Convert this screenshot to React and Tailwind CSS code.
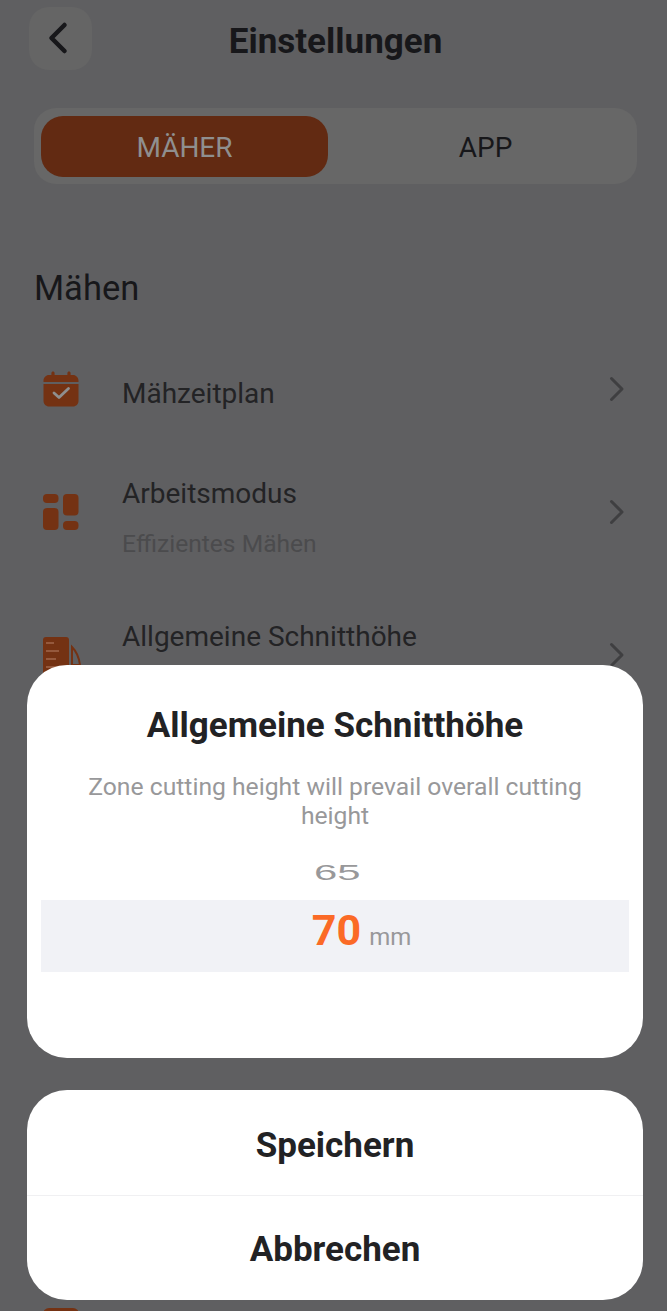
import { ChevronLeft } from 'lucide-react';

function CalendarIcon() {
  return (
    <svg width="36" height="36" viewBox="0 0 36 36" fill="none">
      <path d="M10 0.5c.9 0 1.6.7 1.6 1.6V4h12.8V2.1c0-.9.7-1.6 1.6-1.6s1.6.7 1.6 1.6V4h2.4C33 4 35.5 6.500 35.500 9.500V11H.5V9.500C.5 6.500 3 4 6 4h2.400V2.100c0-.9.7-1.600 1.600-1.600z" fill="#743213" />
      <path d="M.5 13h35V30c0 3-2.500 5.500-5.500 5.500H6C3 35.500.5 33 .5 30z" fill="#743213" />
      <path d="M11 22l5 4.500L25.500 17.500" stroke="#8f8f8f" strokeWidth="2.800" strokeLinecap="round" strokeLinejoin="round" />
    </svg>
  );
}

function GridIcon() {
  return (
    <svg width="36" height="36" viewBox="0 0 36 36" fill="#743213">
      <rect x="0" y="0" width="15.500" height="9" rx="4" />
      <rect x="0" y="14" width="15.500" height="22" rx="4" />
      <rect x="20" y="0" width="15.500" height="21.500" rx="4" />
      <rect x="20" y="27" width="15.500" height="9" rx="4" />
    </svg>
  );
}

function HeightIcon() {
  return (
    <svg width="38" height="44" viewBox="0 0 38 44" fill="none">
      <rect x="0" y="0" width="26" height="44" rx="3" fill="#743213" />
      <path d="M3 6h8M3 14h13M3 22h10M3 30h13" stroke="#a0674c" strokeWidth="1.500" />
      <path d="M29 10c4 4 7 10 8 18h-8z" stroke="#743213" strokeWidth="2" />
    </svg>
  );
}

function RowChevron({ className }) {
  return (
    <svg width="16" height="26" viewBox="0 0 16 26" fill="none" className={`shrink-0 mr-[42px] ${className}`}>
      <path d="M2.500 2.500l10.500 10.500-10.500 10.500" stroke="#3f3f41" strokeWidth="3" strokeLinecap="round" strokeLinejoin="round" />
    </svg>
  );
}

function SettingRow({ icon, title, subtitle, className, textClass, chevronClass }) {
  return (
    <div className={`flex ${className}`}>
      <div className="ml-[43px] w-[79px] shrink-0">{icon}</div>
      <div className={`flex-1 ${textClass}`}>
        <div className="text-[28px] leading-[36px] text-[#232325]">{title}</div>
        {subtitle && <div className="mt-[14px] text-[24.600px] leading-[36px] text-[#4b4b4d]">{subtitle}</div>}
      </div>
      <RowChevron className={chevronClass} />
    </div>
  );
}

export default function App() {
  return (
    <div className="relative w-[667px] h-[1311px] overflow-hidden bg-[#5f5f61] font-['Roboto',sans-serif]">
      {/* settings page behind the sheet */}
      <div className="pt-[7px]">
        <div className="relative h-[63px] flex items-center justify-center">
          <div className="absolute left-[29px] top-0 w-[63px] h-[63px] rounded-[20px] bg-[#656565] flex items-center justify-center">
            <ChevronLeft size={52} strokeWidth={2.1} className="text-[#17171a] -ml-[6px] -mt-[1px]" />
          </div>
          <h1 className="text-[35px] font-bold text-[#17171a] leading-none mt-[5px] pl-[4px]">Einstellungen</h1>
        </div>

        <div className="ml-[34px] w-[603px] mt-[38px] h-[76px] p-[7px] pr-[8px] rounded-[22px] bg-[#676767] flex">
          <div className="w-[287px] h-[61px] mt-[1px] rounded-[22px] bg-[#622a12] flex items-center justify-center pt-[3px] text-[28px] text-[#8f8f8f]">MÄHER</div>
          <div className="flex-1 flex items-center justify-center pl-[14px] pt-[4px] text-[28px] text-[#17171a]">APP</div>
        </div>

        <h2 className="ml-[34px] mt-[83px] text-[34.500px] leading-[42px] text-[#17171a]">Mähen</h2>

        <SettingRow className="mt-[63px] h-[36px]" textClass="pt-[4px]" chevronClass="mt-[4px]" icon={<div className="-mt-[1px]"><CalendarIcon /></div>} title="Mähzeitplan" />
        <SettingRow className="mt-[68px] h-[87px] items-start" chevronClass="mt-[23px]" icon={<div className="mt-[18px]"><GridIcon /></div>} title="Arbeitsmodus" subtitle="Effizientes Mähen" />
        <SettingRow className="mt-[56px] h-[36px]" chevronClass="mt-[23px]" icon={<div className="mt-[18px]"><HeightIcon /></div>} title="Allgemeine Schnitthöhe" />
      </div>

      <div className="absolute left-[43px] top-[1308px] w-[36px] h-[10px] rounded-t-[6px] bg-[#743213]" />

      {/* bottom sheet */}
      <div className="absolute inset-x-0 top-[665px] pl-[27px] pr-[24px] flex flex-col gap-[32px]">
        <div className="h-[393px] rounded-[40px] bg-white pt-[41px] px-[14px] text-center">
          <div className="text-[35px] leading-[40px] font-bold text-[#222224] whitespace-nowrap">Allgemeine Schnitthöhe</div>
          <p className="mt-[26px] mx-auto w-[510px] text-[24.700px] leading-[29px] text-[#98989a]">Zone cutting height will prevail overall cutting height</p>
          <div className="mt-[27px] h-[30px] flex items-center justify-center">
            <span className="text-[22px] text-[#98989a] font-['Liberation_Sans',sans-serif] scale-x-[1.9] translate-x-[2px]">65</span>
          </div>
          <div className="mt-[13px] h-[72px] bg-[#f1f2f6] flex items-baseline justify-center pl-[53px] pt-[1px]">
            <span className="text-[43px] leading-[58px] font-bold text-[#fb6a26]">70</span>
            <span className="ml-[8px] text-[24px] text-[#98989a]">mm</span>
          </div>
        </div>

        <div className="h-[210px] rounded-[40px] bg-white flex flex-col">
          <button className="h-[106px] border-b border-[#f0f0f2] pt-[7px] text-[35px] font-bold text-[#222224]">Speichern</button>
          <button className="flex-1 pt-[5px] text-[35px] font-bold text-[#222224]">Abbrechen</button>
        </div>
      </div>
    </div>
  );
}
